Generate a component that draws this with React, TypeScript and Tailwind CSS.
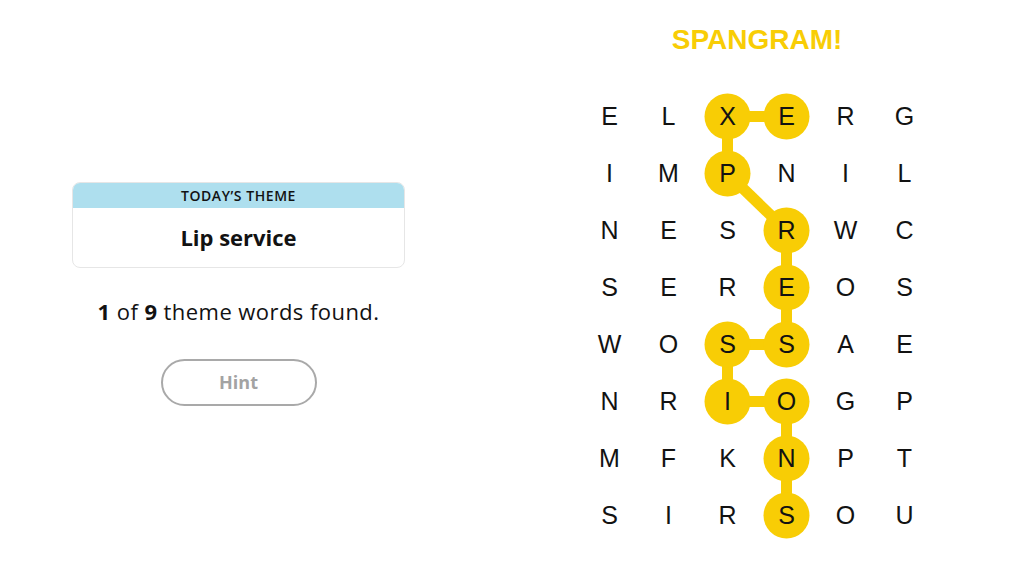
const GRID = [
  'ELXERG',
  'IMPNIL',
  'NESRWC',
  'SEREOS',
  'WOSSAE',
  'NRIOGP',
  'MFKNPT',
  'SIRSOU',
]

// spangram path, [row, col]
const PATH: [number, number][] = [
  [0, 3], [0, 2], [1, 2], [2, 3], [3, 3], [4, 3], [4, 2], [5, 2], [5, 3], [6, 3], [7, 3],
]

const CELL_W = 59
const CELL_H = 57
const YELLOW = '#f8cd05'

function center(r: number, c: number) {
  return { x: c * CELL_W + CELL_W / 2, y: r * CELL_H + CELL_H / 2 }
}

function Board() {
  return (
    <div className="relative w-[354px] h-[456px]">
      <svg className="absolute inset-0" width={354} height={456}>
        {PATH.slice(1).map(([r, c], i) => {
          const a = center(PATH[i][0], PATH[i][1])
          const b = center(r, c)
          return <line key={i} x1={a.x} y1={a.y} x2={b.x} y2={b.y} stroke={YELLOW} strokeWidth={11} />
        })}
        {PATH.map(([r, c]) => {
          const p = center(r, c)
          return <circle key={`${r}-${c}`} cx={p.x} cy={p.y} r={23} fill={YELLOW} />
        })}
      </svg>
      <div className="relative grid grid-cols-6">
        {GRID.flatMap((row, r) =>
          row.split('').map((ch, c) => (
            <div key={`${r}-${c}`} className="flex h-[57px] w-[59px] items-center justify-center text-[25px]">
              {ch}
            </div>
          ))
        )}
      </div>
    </div>
  )
}

export default function App() {
  return (
    <div className="flex h-[576px] w-[1024px] bg-white text-[#121212] font-['Liberation_Sans',Arial,sans-serif]">
      <div className="ml-[72px] flex w-[333px] flex-col items-center pt-[182px] font-['Open_Sans',sans-serif]">
        <div className="w-full overflow-hidden rounded-lg border border-[#e6e6e6]">
          <div className="flex h-[25px] items-center justify-center bg-[#aedfee] text-[14px] font-semibold tracking-[0.04em]">
            TODAY’S THEME
          </div>
          <div className="flex h-[59px] items-center justify-center text-[22px] font-bold">
            Lip service
          </div>
        </div>
        <p className="mt-[27px] text-[22px] tracking-[0.02em]">
          <span className="font-bold">1</span> of <span className="font-bold">9</span> theme words found.
        </p>
        <button className="mt-[31px] h-[47px] w-[156px] rounded-full border-2 border-[#a9a9a9] text-[18px] font-bold text-[#a3a3a3]">
          Hint
        </button>
      </div>
      <div className="ml-[175px] flex flex-col items-center pt-[22px]">
        <h1 className="h-[66px] text-[28px] font-bold leading-[36px] text-[#f8cd05]">SPANGRAM!</h1>
        <Board />
      </div>
    </div>
  )
}
